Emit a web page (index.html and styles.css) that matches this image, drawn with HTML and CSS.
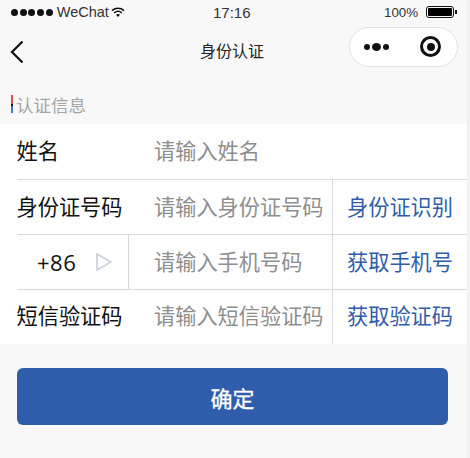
FILE: index.html
```html
<!DOCTYPE html>
<html lang="zh-CN">
<head>
    <meta charset="UTF-8">
    <title>身份认证</title>
    <link rel="stylesheet" href="styles.css">
</head>
<body>

<div class="page">
    <div class="status-bar">
        <div class="status-left">
            <span class="signal"><i></i><i></i><i></i><i></i><i></i></span>
            <span class="carrier">WeChat</span>
            <svg class="wifi" width="14" height="11" viewBox="0 0 14 11">
                <path d="M1 3.6C4.4.6 9.6.6 13 3.6" fill="none" stroke="#111" stroke-width="1.5"/>
                <path d="M3.2 5.9c2.2-1.9 5.4-1.9 7.6 0" fill="none" stroke="#111" stroke-width="1.5"/>
                <path d="M5 7.7c1.2-.9 2.8-.9 4 0L7 10z" fill="#111"/>
            </svg>
        </div>
        <div class="status-time">17:16</div>
        <div class="status-right">
            <span>100%</span>
            <span class="battery"><i></i></span>
            <span class="battery-tip"></span>
        </div>
    </div>

    <div class="nav-bar">
        <svg class="back" width="14" height="24" viewBox="0 0 14 24">
            <path d="M12.5 1.5 2 12l10.5 10.5" fill="none" stroke="#111" stroke-width="2.2"/>
        </svg>
        <div class="nav-title">身份认证</div>
        <div class="capsule">
            <span class="more"><i></i><b></b><i></i></span>
            <span class="target"><i></i></span>
        </div>
    </div>

    <div class="section-title"><span class="mark"></span>认证信息</div>

    <div class="form">
        <div class="row">
            <div class="label">姓名</div>
            <div class="input">请输入姓名</div>
        </div>
        <div class="row">
            <div class="label">身份证号码</div>
            <div class="input">请输入身份证号码</div>
            <div class="action">身份证识别</div>
        </div>
        <div class="row">
            <div class="code">
                <span>+86</span>
                <svg width="16" height="18" viewBox="0 0 16 18">
                    <path d="M1 1 15 9 1 17z" fill="none" stroke="#c8ced8" stroke-width="1.6"/>
                </svg>
            </div>
            <div class="input phone">请输入手机号码</div>
            <div class="action">获取手机号</div>
        </div>
        <div class="row">
            <div class="label">短信验证码</div>
            <div class="input">请输入短信验证码</div>
            <div class="action">获取验证码</div>
        </div>
    </div>

    <button class="confirm">确定</button>
</div>

</body>
</html>
```

FILE: styles.css
```css
body {
    margin: 0;
    background-color: #f1f1f1;
    font-family: "Liberation Sans", "Noto Sans CJK SC", sans-serif;
    overflow: hidden;
}

.page {
    width: 467px;
    height: 458px;
    background-color: #f8f8f8;
}

/* status bar */
.status-bar {
    display: flex;
    align-items: center;
    justify-content: space-between;
    height: 24px;
    padding: 0 11px;
    font-size: 14px;
    color: #333;
    position: relative;
}

.status-left {
    display: flex;
    align-items: center;
    gap: 4px;
}

.carrier {
    font-size: 14.500px;
}

.signal {
    display: flex;
    gap: 1.700px;
}

.signal i {
    width: 7px;
    height: 7px;
    border-radius: 50%;
    background-color: #111;
}

.wifi {
    margin-left: -2px;
}

.status-time {
    font-size: 15px;
    position: absolute;
    left: 213px;
}

.status-right {
    display: flex;
    align-items: center;
    margin-right: -1px;
    font-size: 13.300px;
}

.battery {
    display: block;
    width: 28px;
    height: 12px;
    box-sizing: border-box;
    border: 1px solid #111;
    border-radius: 3px;
    padding: 1px;
    margin-left: 8px;
}

.battery i {
    display: block;
    height: 100%;
    border-radius: 1px;
    background-color: #000;
}

.battery-tip {
    width: 2px;
    height: 4px;
    margin-left: 1px;
    background-color: #111;
}

/* nav bar */
.nav-bar {
    display: flex;
    align-items: center;
    height: 56px;
    padding-left: 10px;
}

.back {
    margin-top: -1px;
}

.nav-title {
    margin-left: 176px;
    margin-top: -4px;
    font-size: 16px;
    color: #222;
}

.capsule {
    display: flex;
    align-items: center;
    box-sizing: border-box;
    width: 109px;
    height: 40px;
    margin-left: 85px;
    margin-top: -11px;
    padding: 0 16px 0 14px;
    justify-content: space-between;
    background-color: #fff;
    border: 1px solid #e2e2e2;
    border-radius: 20px;
}

.more {
    display: flex;
    align-items: center;
    gap: 2px;
}

.more i {
    width: 6px;
    height: 6px;
    border-radius: 50%;
    background-color: #111;
}

.more b {
    width: 9px;
    height: 8px;
    border-radius: 50%;
    background-color: #111;
}

.target {
    display: flex;
    align-items: center;
    justify-content: center;
    box-sizing: border-box;
    width: 21px;
    height: 21px;
    border: 3px solid #111;
    border-radius: 50%;
}

.target i {
    width: 8px;
    height: 8px;
    border-radius: 50%;
    background-color: #111;
}

/* section heading */
.section-title {
    display: flex;
    align-items: center;
    gap: 3px;
    height: 44px;
    padding: 4px 0 0 11px;
    box-sizing: border-box;
    font-size: 17.500px;
    color: #a5a5a5;
}

.mark {
    width: 2px;
    height: 18px;
    background: linear-gradient(#d9534f 0 50%, #111 50% 60%, #3a7bc8 60%);
}

/* form rows */
.form {
    background-color: #fff;
    padding-left: 17px;
}

.row {
    display: flex;
    align-items: stretch;
    height: 55px;
    box-sizing: border-box;
    border-bottom: 1px solid #d9d9d9;
    font-size: 21.200px;
    line-height: 56px;
}

.row:first-child {
    height: 56px;
}

.row:last-child {
    height: 54px;
    border-bottom: none;
    line-height: 54px;
}

.label {
    width: 137.500px;
    margin-left: -0.500px;
    color: #111;
    white-space: nowrap;
}

.input {
    flex: 1;
    color: #8e8e8e;
    white-space: nowrap;
}

.input.phone {
    padding-left: 25px;
}

.code {
    display: flex;
    align-items: center;
    box-sizing: border-box;
    width: 112px;
    padding-left: 20px;
    gap: 20px;
    color: #111;
    font-family: "Open Sans", sans-serif;
    font-size: 22px;
    letter-spacing: 0.5px;
    border-right: 1px solid #d9d9d9;
}

.action {
    width: 135px;
    box-sizing: border-box;
    padding-left: 14px;
    color: #2f5dab;
    white-space: nowrap;
    border-left: 1px solid #d9d9d9;
}

/* confirm button */
.confirm {
    display: block;
    width: 431px;
    height: 57px;
    margin: 24px 0 0 17px;
    border: none;
    border-radius: 6px;
    background-color: #2f5dab;
    color: #fff;
    font-family: inherit;
    font-size: 22px;
    -webkit-text-stroke: 0.3px #fff;
}
```
